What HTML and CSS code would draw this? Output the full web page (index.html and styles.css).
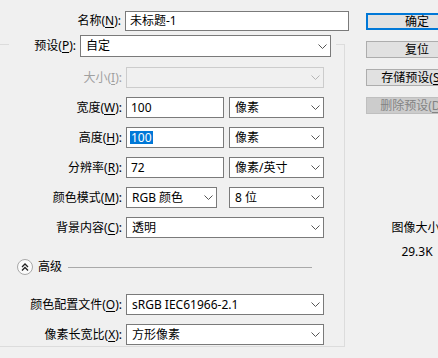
FILE: index.html
```html
<!DOCTYPE html>
<html lang="zh-CN">
<head>
  <meta charset="UTF-8" />
  <title>新建</title>
  <link rel="stylesheet" href="styles.css">
</head>
<body>

<div class="dialog">
  <div class="main">
    <div class="row name-row">
      <label class="lbl">名称(<u>N</u>):</label>
      <div class="field name-field">未标题-1</div>
    </div>

    <div class="group">
      <div class="group-head">
        <label class="lbl head-lbl">预设(<u>P</u>):</label>
        <div class="field select preset">自定
          <svg class="arrow" width="9" height="5" viewBox="0 0 9 5"><path d="M0.5 0.5 L4.5 4.5 L8.5 0.5"/></svg>
        </div>
      </div>

      <div class="row first">
        <label class="lbl disabled">大小(<u>I</u>):</label>
        <div class="field select full off">
          <svg class="arrow" width="9" height="5" viewBox="0 0 9 5"><path d="M0.5 0.5 L4.5 4.5 L8.5 0.5"/></svg>
        </div>
      </div>

      <div class="row">
        <label class="lbl">宽度(<u>W</u>):</label>
        <div class="field num">100</div>
        <div class="field select unit">像素
          <svg class="arrow" width="9" height="5" viewBox="0 0 9 5"><path d="M0.5 0.5 L4.5 4.5 L8.5 0.5"/></svg>
        </div>
      </div>

      <div class="row">
        <label class="lbl">高度(<u>H</u>):</label>
        <div class="field num"><span class="sel">100</span></div>
        <div class="field select unit">像素
          <svg class="arrow" width="9" height="5" viewBox="0 0 9 5"><path d="M0.5 0.5 L4.5 4.5 L8.5 0.5"/></svg>
        </div>
      </div>

      <div class="row">
        <label class="lbl">分辨率(<u>R</u>):</label>
        <div class="field num">72</div>
        <div class="field select unit">像素/英寸
          <svg class="arrow" width="9" height="5" viewBox="0 0 9 5"><path d="M0.5 0.5 L4.5 4.5 L8.5 0.5"/></svg>
        </div>
      </div>

      <div class="row">
        <label class="lbl">颜色模式(<u>M</u>):</label>
        <div class="field select mode">RGB 颜色
          <svg class="arrow" width="9" height="5" viewBox="0 0 9 5"><path d="M0.5 0.5 L4.5 4.5 L8.5 0.5"/></svg>
        </div>
        <div class="field select unit bits">8 位
          <svg class="arrow" width="9" height="5" viewBox="0 0 9 5"><path d="M0.5 0.5 L4.5 4.5 L8.5 0.5"/></svg>
        </div>
      </div>

      <div class="row">
        <label class="lbl">背景内容(<u>C</u>):</label>
        <div class="field select full">透明
          <svg class="arrow" width="9" height="5" viewBox="0 0 9 5"><path d="M0.5 0.5 L4.5 4.5 L8.5 0.5"/></svg>
        </div>
      </div>

      <div class="advanced">
        <span class="adv-btn">
          <svg width="8" height="8" viewBox="0 0 8 8"><path d="M1 4 L4 1 L7 4 M1 7.5 L4 4.5 L7 7.5"/></svg>
        </span>
        <span class="adv-text">高级</span>
        <span class="adv-line"></span>
      </div>

      <div class="row after-adv">
        <label class="lbl">颜色配置文件(<u>O</u>):</label>
        <div class="field select full">sRGB IEC61966-2.1
          <svg class="arrow" width="9" height="5" viewBox="0 0 9 5"><path d="M0.5 0.5 L4.5 4.5 L8.5 0.5"/></svg>
        </div>
      </div>

      <div class="row">
        <label class="lbl">像素长宽比(<u>X</u>):</label>
        <div class="field select full">方形像素
          <svg class="arrow" width="9" height="5" viewBox="0 0 9 5"><path d="M0.5 0.5 L4.5 4.5 L8.5 0.5"/></svg>
        </div>
      </div>
    </div>
  </div>

  <div class="side">
    <div class="btn default">确定</div>
    <div class="btn">复位</div>
    <div class="btn">存储预设(<u>S</u>)...</div>
    <div class="btn disabled">删除预设(<u>D</u>)...</div>

    <div class="info">
      <div>图像大小:</div>
      <div class="size">29.3K</div>
    </div>
  </div>
</div>

</body>
</html>
```

FILE: styles.css
```css
html, body {
  margin: 0;
  height: 100%;
  background-color: #f0f0f0;
  color: #000;
  font-family: "Noto Sans", "Noto Sans CJK SC", sans-serif;
  font-size: 12px;
  overflow: hidden;
}

u {
  text-decoration-thickness: 1px;
  text-underline-offset: 2px;
}

.dialog {
  display: flex;
  padding-top: 11px;
}

.main {
  width: 366px;
  flex: none;
}

/* rows: label column ends at x=121, controls start at x=125 */
.row {
  display: flex;
  align-items: center;
  height: 21px;
  margin-top: 9px;
}

.row.first {
  margin-top: 10px;
}

.row.after-adv {
  margin-top: 19px;
}

.name-row {
  height: 20px;
  margin-top: 0;
}

.lbl {
  width: 125px;
  flex: none;
  box-sizing: border-box;
  padding-right: 4px;
  text-align: right;
  white-space: nowrap;
  line-height: 14px;
}

.lbl.disabled {
  color: #a0a0a0;
}

.field {
  height: 100%;
  box-sizing: border-box;
  border: 1px solid #7a7a7a;
  background-color: #fff;
  padding: 0 3px 0 4px;
  display: flex;
  align-items: center;
  white-space: nowrap;
  line-height: 14px;
}

.name-field {
  width: 224px;
}

.num {
  width: 98px;
}

.unit {
  width: 95px;
  margin-left: 5px;
}

.bits {
  margin-left: 12px;
}

.mode {
  width: 91px;
}

.full {
  width: 198px;
}

.select {
  padding-left: 5px;
}

.arrow {
  margin-left: auto;
  flex: none;
}

.arrow path {
  fill: none;
  stroke: #555;
  stroke-width: 1;
}

.off {
  background-color: #f0f0f0;
  border-color: #cccccc;
}

.off .arrow path {
  stroke: #b5b5b5;
}

.sel {
  background-color: #0078d7;
  color: #fff;
  line-height: 13px;
  padding: 0 1px;
  margin-left: -1px;
}

/* group box with the preset row as its legend */
.group {
  margin-top: 13px;
  margin-left: -10px;
  width: 355px;
  box-sizing: border-box;
  border: 1px solid #dcdcdc;
  padding: 0 0 1px 10px;
}

.group-head {
  display: flex;
  align-items: center;
  width: fit-content;
  height: 22px;
  margin-top: -10px;
  margin-left: 8px;
  padding-right: 5px;
  background-color: #f0f0f0;
}

.head-lbl {
  width: 71px;
}

.preset {
  width: 251px;
}

.advanced {
  display: flex;
  align-items: center;
  height: 16px;
  margin-top: 21px;
}

.adv-btn {
  width: 16px;
  height: 16px;
  box-sizing: border-box;
  margin-left: 16px;
  border: 1px solid #a8a8a8;
  border-radius: 50%;
  background-color: #fbfbfb;
  display: flex;
  align-items: center;
  justify-content: center;
}

.adv-btn path {
  fill: none;
  stroke: #222;
  stroke-width: 1.3;
}

.adv-text {
  margin-left: 5px;
  line-height: 14px;
}

.adv-line {
  flex: 1;
  margin: 0 32px 0 6px;
  border-top: 1px solid #a9a9a9;
}

/* right column */
.side {
  width: 102px;
  flex: none;
  padding-top: 2px;
}

.btn {
  height: 17px;
  box-sizing: border-box;
  border: 1px solid #adadad;
  background-color: #e1e1e1;
  text-align: center;
  line-height: 15px;
  margin-bottom: 11px;
  white-space: nowrap;
}

.btn.default {
  border: 2px solid #0078d7;
  line-height: 13px;
}

.btn.disabled {
  background-color: #cccccc;
  border-color: #bfbfbf;
  color: #838383;
}

.info {
  margin-top: 107px;
  text-align: center;
  line-height: 14px;
}

.info .size {
  margin-top: 10px;
}
```
